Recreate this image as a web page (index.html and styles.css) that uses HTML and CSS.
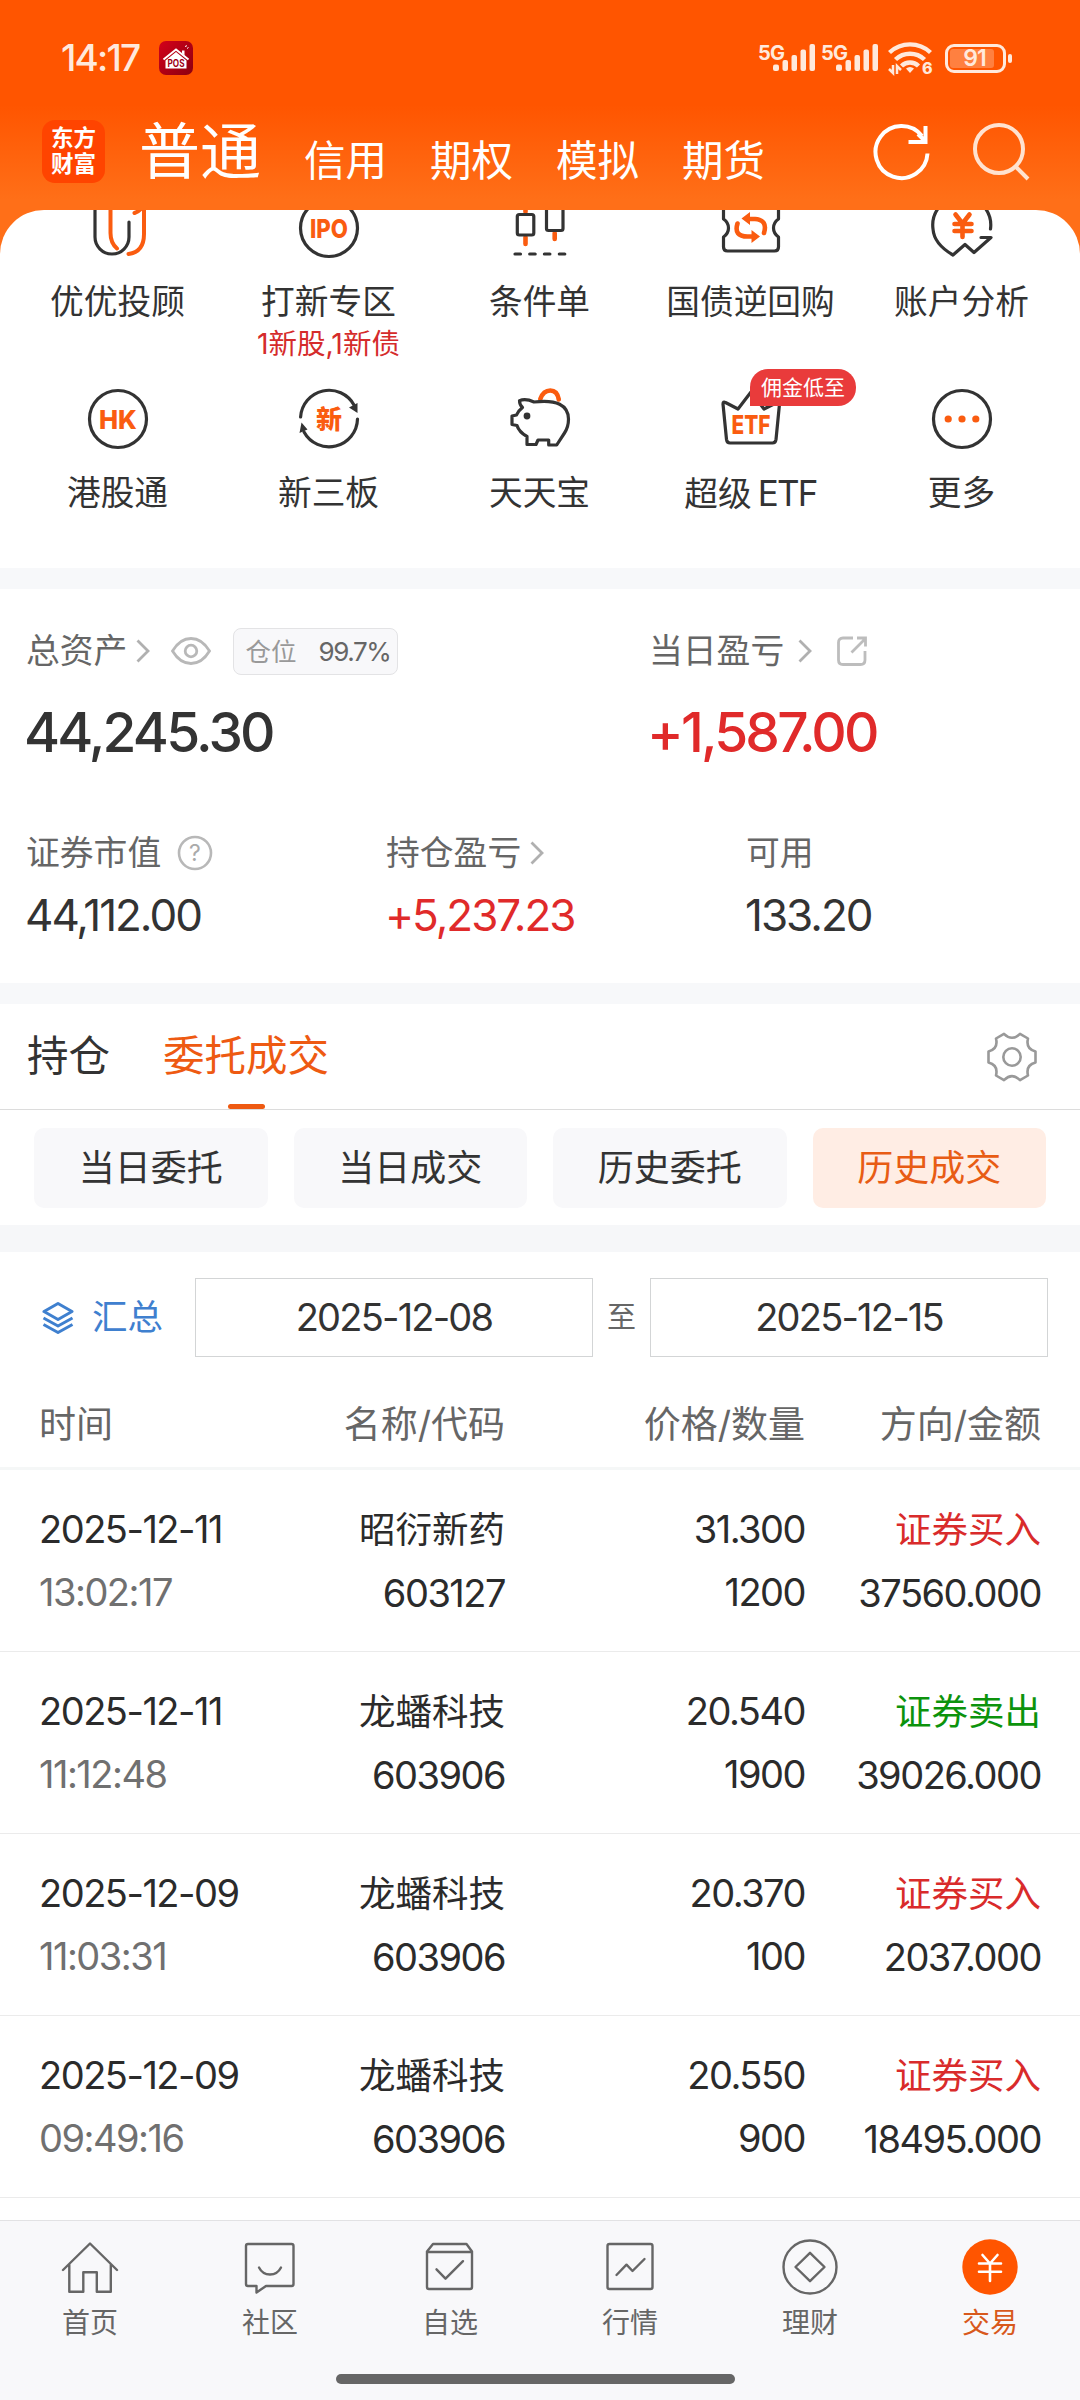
FILE: index.html
```html
<!DOCTYPE html>
<html lang="zh-CN">
<head>
    <meta charset="UTF-8">
    <meta name="viewport" content="width=device-width, initial-scale=1.0">
    <title>交易</title>
    <link rel="stylesheet" href="styles.css">
</head>
<body>
    <header class="header">
        <div class="status-bar">
            <span class="clock">14:17</span>
            <svg class="pos-icon" width="34" height="34" viewBox="0 0 34 34">
                <defs>
                    <linearGradient id="posBg" x1="0" y1="0" x2="1" y2="1">
                        <stop offset="0" stop-color="#d4001a"/>
                        <stop offset="1" stop-color="#8c0010"/>
                    </linearGradient>
                </defs>
                <rect width="34" height="34" rx="7" fill="url(#posBg)"/>
                <path d="M4.5 18.5L17 8.5l12.5 10" fill="none" stroke="#fff" stroke-width="2"/>
                <path d="M6.5 19.5L17 11l10.5 8.5V27.5h-21zM23 9.5h2.5v5L23 12.5z" fill="#fff"/>
                <path d="M26 5.5l2-.8M28 7.5l1.5-1" stroke="#fff" stroke-width="1"/>
                <text class="pos-text" x="17" y="25.5" text-anchor="middle" textLength="17" lengthAdjust="spacingAndGlyphs">POS</text>
            </svg>
            <div class="status-right">
                <div class="signal">
                    <span>5G</span>
                    <svg width="43" height="27" viewBox="0 0 43 27" fill="#ffe9dc">
                        <rect x="0" y="20.5" width="6" height="6.5" rx="2"/>
                        <rect x="9.5" y="16" width="5.5" height="11" rx="2"/>
                        <rect x="18.5" y="11" width="5.5" height="16" rx="2"/>
                        <rect x="27.5" y="5.5" width="5.5" height="21.5" rx="2"/>
                        <rect x="36.5" y="0" width="5.5" height="27" rx="2"/>
                    </svg>
                </div>
                <div class="signal">
                    <span>5G</span>
                    <svg width="43" height="27" viewBox="0 0 43 27" fill="#ffe9dc">
                        <rect x="0" y="20.5" width="6" height="6.5" rx="2"/>
                        <rect x="9.5" y="16" width="5.5" height="11" rx="2"/>
                        <rect x="18.5" y="11" width="5.5" height="16" rx="2"/>
                        <rect x="27.5" y="5.5" width="5.5" height="21.5" rx="2"/>
                        <rect x="36.5" y="0" width="5.5" height="27" rx="2"/>
                    </svg>
                </div>
                <svg class="wifi" width="46" height="38" viewBox="0 0 46 38">
                    <g fill="none" stroke="#ffe9dc" stroke-width="4.4">
                        <path d="M1.5 13.5a30 30 0 0 1 41 0"/>
                        <path d="M7.5 20.500a21 21 0 0 1 29 0"/>
                        <path d="M13.500 27a12 12 0 0 1 17 0"/>
                    </g>
                    <path d="M18 29.500q4-3 8 0l-4 4.500z" fill="#ffe9dc"/>
                    <path d="M5 26v8l-4-4M9 35v-8l4 4" fill="none" stroke="#ffe9dc" stroke-width="2.500"/>
                    <text class="wifi-text" x="34" y="34.500">6</text>
                </svg>
                <div class="battery"><span>91</span></div>
            </div>
        </div>
        <nav class="account-tabs">
            <div class="logo"><span>东方</span><span>财富</span></div>
            <a class="account-tab current">普通</a>
            <a class="account-tab">信用</a>
            <a class="account-tab">期权</a>
            <a class="account-tab">模拟</a>
            <a class="account-tab">期货</a>
            <svg class="refresh" width="60" height="60" viewBox="0 0 60 60" fill="none" stroke="#fff" stroke-width="4">
                <path d="M55.5 32.5A26 26 0 1 1 50 15"/>
                <path d="M53.5 5v16h-17M53 20L46 13"/>
            </svg>
            <svg class="search" width="60" height="60" viewBox="0 0 60 60" fill="none" stroke="#ffe2d0" stroke-width="4">
                <circle cx="28" cy="28" r="24"/>
                <path d="M45 46l12 12"/>
            </svg>
        </nav>
    </header>

    <main class="content">
        <div class="menu-wrap">
            <section class="menu">
                <a class="menu-item">
                    <svg class="menu-icon" viewBox="0 0 64 64">
                        <path class="dark" d="M9 0v41a17 17 0 0 0 34 0V26"/>
                        <path class="orange" d="M24.5 0v37q0 10 6.5 15.5M48.5 17q6-2 9.5-8v29q0 18-15.5 20"/>
                    </svg>
                    <span class="menu-label">优优投顾</span>
                </a>
                <a class="menu-item">
                    <svg class="menu-icon" viewBox="0 0 64 64">
                        <circle class="dark" cx="32" cy="32" r="28.5"/>
                        <text class="icon-text" x="13" y="42" textLength="38" lengthAdjust="spacingAndGlyphs">IPO</text>
                    </svg>
                    <span class="menu-label">打新专区</span>
                    <span class="menu-sub">1新股,1新债</span>
                </a>
                <a class="menu-item">
                    <svg class="menu-icon" viewBox="0 0 64 64">
                        <path class="orange wide" d="M17.5 8v8M17.5 41v7M46.7 37v6"/>
                        <rect class="dark" x="9.3" y="18.5" width="16.5" height="20.5" rx="2"/>
                        <rect class="dark" x="38.5" y="12" width="16.5" height="22.5" rx="2"/>
                        <path class="dark" d="M7 58h5.5M21.7 58h5.5M36.4 58h5.5M51.3 58h5.5"/>
                    </svg>
                    <span class="menu-label">条件单</span>
                </a>
                <a class="menu-item">
                    <svg class="menu-icon" viewBox="0 0 64 64">
                        <path class="dark" d="M4.5 8v15q5 3.5 5 9t-5 9v10q0 4 4 4h47q4 0 4-4V41q-5-3.5-5-9t5-9V8"/>
                        <path class="orange wide" d="M18.5 27.5q-4 13 10 13h5M45 37q4-13-9-14h-5"/>
                        <path d="M31 16v13l-8.500-6.500zM32.500 34v13l8.500-6.500z" fill="#fa5c10"/>
                    </svg>
                    <span class="menu-label">国债逆回购</span>
                </a>
                <a class="menu-item">
                    <svg class="menu-icon" viewBox="0 0 64 64">
                        <path class="dark" d="M60.5 33A29 29 0 1 0 3 33q1 15 20 26l12-10.5 9 8 17-15H51"/>
                        <path class="orange wide" d="M25.5 18.5l7 9 7-9M32.5 28v13M24.5 28h17M24.5 35h17"/>
                    </svg>
                    <span class="menu-label">账户分析</span>
                </a>
                <a class="menu-item">
                    <svg class="menu-icon" viewBox="0 0 64 64">
                        <circle class="dark" cx="32" cy="32" r="28.5"/>
                        <text class="icon-text" x="13" y="41.5" textLength="38" lengthAdjust="spacingAndGlyphs">HK</text>
                    </svg>
                    <span class="menu-label">港股通</span>
                </a>
                <a class="menu-item">
                    <svg class="menu-icon" viewBox="0 0 64 64">
                        <path class="dark" d="M3.6 30A28.5 28.5 0 0 1 57 18M60.5 32A28.5 28.5 0 0 1 7 45"/>
                        <path d="M52 20.5l8.5-4.500v10zM2.500 46l2-10.500 6 7z" fill="#333"/>
                        <text class="icon-text" x="32" y="41.5" text-anchor="middle">新</text>
                    </svg>
                    <span class="menu-label">新三板</span>
                </a>
                <a class="menu-item">
                    <svg class="menu-icon" viewBox="0 0 64 64">
                        <path class="orange wide" d="M32.3 12q3-8.5 10-8.5t8.5 9"/>
                        <path class="dark" d="M11.5 13.7q6-2.5 14.5 1.3 34-4 34.5 17 0 8-4 14L48.7 58h-8v-5H30l-2 4.5h-9v-8Q11 45 9 38.5l-5-1V29l4.5-1q1.5-4 6-7.5-3-3-3-6.8z"/>
                        <circle cx="19" cy="29" r="3.4" fill="#333"/>
                    </svg>
                    <span class="menu-label">天天宝</span>
                </a>
                <a class="menu-item">
                    <svg class="menu-icon" viewBox="0 0 64 64">
                        <path class="dark" d="M4 17q0-3 2.5-1.5L19 22 32 5l13 17 13-6.5q3-1 2.5 1.5L57 52.5q-.5 3.5-3.5 3.5H11q-3 0-3.5-3.5z"/>
                        <text class="icon-text" x="12.5" y="47" textLength="39" lengthAdjust="spacingAndGlyphs">ETF</text>
                    </svg>
                    <span class="menu-badge">佣金低至</span>
                    <span class="menu-label">超级<span class="latin">ETF</span></span>
                </a>
                <a class="menu-item">
                    <svg class="menu-icon" viewBox="0 0 64 64">
                        <circle class="dark" cx="32" cy="32" r="28.5"/>
                        <g fill="#fa5c10">
                            <circle cx="18.2" cy="32" r="3.6"/>
                            <circle cx="32" cy="32" r="3.6"/>
                            <circle cx="45.8" cy="32" r="3.6"/>
                        </g>
                    </svg>
                    <span class="menu-label">更多</span>
                </a>
            </section>
        </div>

        <section class="assets">
            <div class="assets-main">
                <div>
                    <div class="asset-label">
                        总资产
                        <svg class="chevron" width="14" height="24" viewBox="0 0 14 24"><path d="M1.5 1.5L12 12 1.5 22.5"/></svg>
                        <svg class="eye" width="40" height="28" viewBox="0 0 40 28" fill="none" stroke="#b8b8b8" stroke-width="2.8">
                            <path d="M1.5 14Q9 1.5 20 1.5T38.5 14Q31 26.5 20 26.5T1.5 14z"/>
                            <circle cx="20" cy="14" r="5.8"/>
                        </svg>
                        <span class="position-tag">仓位<b>99.7%</b></span>
                    </div>
                    <div class="asset-total">44,245.30</div>
                </div>
                <div>
                    <div class="asset-label">
                        当日盈亏
                        <svg class="chevron wide-gap" width="14" height="24" viewBox="0 0 14 24"><path d="M1.5 1.5L12 12 1.5 22.5"/></svg>
                        <svg class="share" width="30" height="30" viewBox="0 0 30 30" fill="none" stroke="#bdbdbd" stroke-width="2.8">
                            <path d="M16 2H6Q1.5 2 1.5 6.5v17.5Q1.5 28.5 6 28.5h17.5q4.5 0 4.5-4.5V15"/>
                            <path d="M14.5 16.5L28 3M20 2h8.5v8.5"/>
                        </svg>
                    </div>
                    <div class="asset-total profit">+1,587.00</div>
                </div>
            </div>
            <div class="assets-sub">
                <div>
                    <div class="asset-label">
                        证券市值
                        <svg class="help" width="36" height="36" viewBox="0 0 36 36">
                            <circle cx="18" cy="18" r="16" fill="none" stroke="#b8b8b8" stroke-width="2.6"/>
                            <text class="help-text" x="18" y="26" text-anchor="middle">?</text>
                        </svg>
                    </div>
                    <div class="asset-value">44,112.00</div>
                </div>
                <div>
                    <div class="asset-label">
                        持仓盈亏
                        <svg class="chevron" width="14" height="24" viewBox="0 0 14 24"><path d="M1.5 1.5L12 12 1.5 22.5"/></svg>
                    </div>
                    <div class="asset-value profit">+5,237.23</div>
                </div>
                <div>
                    <div class="asset-label">可用</div>
                    <div class="asset-value">133.20</div>
                </div>
            </div>
        </section>

        <section class="trade-tabs">
            <a class="trade-tab">持仓</a>
            <a class="trade-tab active">委托成交</a>
            <svg class="gear" width="50" height="50" viewBox="0 0 50 50" fill="none" stroke="#999" stroke-width="2.6">
                <path d="M17 1.800q8 8 16 0l8 4.700q-2.500 10.500 7.500 13v11q-10 2.500-7.500 13l-8 4.700q-8-8-16 0l-8-4.700q2.500-10.500-7.500-13v-11q10-2.500 7.500-13z" stroke-linejoin="round"/>
                <circle cx="25" cy="25" r="8.7"/>
            </svg>
        </section>

        <section class="sub-tabs">
            <a class="sub-tab">当日委托</a>
            <a class="sub-tab">当日成交</a>
            <a class="sub-tab">历史委托</a>
            <a class="sub-tab active">历史成交</a>
        </section>

        <section class="filter">
            <svg class="layers" width="32" height="34" viewBox="0 0 32 34" fill="none" stroke="#3f80cf" stroke-width="3" stroke-linejoin="round">
                <path d="M16 2.5L30 10.5 16 18.5 2 10.5z"/>
                <path d="M1.5 17L16 25l14.5-8M1.5 23.5L16 31.5l14.5-8"/>
            </svg>
            <span class="summary">汇总</span>
            <span class="date-box">2025-12-08</span>
            <span class="date-to">至</span>
            <span class="date-box">2025-12-15</span>
        </section>

        <section class="deals">
            <div class="deal-head">
                <span>时间</span>
                <span>名称/代码</span>
                <span>价格/数量</span>
                <span>方向/金额</span>
            </div>
            <div class="deal">
                <div>2025-12-11<br><span class="time">13:02:17</span></div>
                <div><span class="cn">昭衍新药</span><br>603127</div>
                <div>31.300<br>1200</div>
                <div><span class="cn buy">证券买入</span><br>37560.000</div>
            </div>
            <div class="deal">
                <div>2025-12-11<br><span class="time">11:12:48</span></div>
                <div><span class="cn">龙蟠科技</span><br>603906</div>
                <div>20.540<br>1900</div>
                <div><span class="cn sell">证券卖出</span><br>39026.000</div>
            </div>
            <div class="deal">
                <div>2025-12-09<br><span class="time">11:03:31</span></div>
                <div><span class="cn">龙蟠科技</span><br>603906</div>
                <div>20.370<br>100</div>
                <div><span class="cn buy">证券买入</span><br>2037.000</div>
            </div>
            <div class="deal">
                <div>2025-12-09<br><span class="time">09:49:16</span></div>
                <div><span class="cn">龙蟠科技</span><br>603906</div>
                <div>20.550<br>900</div>
                <div><span class="cn buy">证券买入</span><br>18495.000</div>
            </div>
        </section>
    </main>

    <footer class="footer">
        <nav class="bottom-nav">
            <a class="nav-item">
                <svg class="nav-icon" viewBox="0 0 60 60">
                    <path d="M3 33L30 6.5 57 33M9.3 27.5v27.2h14V35.3h13.5v19.4h14V27.5"/>
                </svg>
                首页
            </a>
            <a class="nav-item">
                <svg class="nav-icon" viewBox="0 0 60 60">
                    <path d="M8 7h43.5q2 0 2 2v38q0 2-2 2H26l-9.5 6.5V49H8q-2 0-2-2V9q0-2 2-2z"/>
                    <path d="M19 30.5q3.5 7 11 7t11-7"/>
                </svg>
                社区
            </a>
            <a class="nav-item">
                <svg class="nav-icon" viewBox="0 0 60 60">
                    <path d="M7 15v35q0 2 2 2h41q2 0 2-2V15zM7 14.5L13 7h33.5l5.5 7.5"/>
                    <path d="M16.5 32.3l9 9.4 17.5-17.5"/>
                </svg>
                自选
            </a>
            <a class="nav-item">
                <svg class="nav-icon" viewBox="0 0 60 60">
                    <rect x="7.5" y="7" width="45" height="45" rx="2"/>
                    <path d="M16.5 38l10-10.3 6 6.3L44.5 22"/>
                </svg>
                行情
            </a>
            <a class="nav-item">
                <svg class="nav-icon" viewBox="0 0 60 60">
                    <circle cx="30" cy="30" r="26.5"/>
                    <path d="M30 15.8L44.5 30 30 44.2 15.5 30z"/>
                </svg>
                理财
            </a>
            <a class="nav-item active">
                <svg class="nav-icon" viewBox="0 0 60 60">
                    <circle class="coin" cx="30" cy="30" r="27.7"/>
                    <path class="yen" d="M22.5 18l7.5 8.500 7.500-8.500M30 26.500V44M19 26.500h22M19 34.800h22"/>
                </svg>
                交易
            </a>
        </nav>
        <div class="home-bar"></div>
    </footer>
</body>
</html>
```

FILE: styles.css
```css
* {
    box-sizing: border-box;
}
body {
    font-family: Inter, "Noto Sans CJK SC", sans-serif;
    margin: 0;
    height: 2400px;
    display: flex;
    flex-direction: column;
    background: #fff;
    color: #333;
    overflow: hidden;
}
svg {
    display: block;
    flex-shrink: 0;
}

/* Header */
.header {
    height: 210px;
    padding-top: 40px;
    background: linear-gradient(#ff5500 0, #ff5500 105px, #ff6f18 200px);
    color: #fff;
}
.status-bar {
    display: flex;
    align-items: center;
    height: 36px;
    padding: 0 74px 0 61px;
    color: #ffe9dc;
}
.clock {
    width: 98px;
    font-size: 37px;
    font-weight: 500;
    line-height: 36px;
    letter-spacing: -1.8px;
}
.pos-text {
    font-size: 10px;
    font-weight: 700;
    fill: #a00014;
}
.status-right {
    display: flex;
    align-items: center;
    margin-left: auto;
}
.signal {
    display: flex;
    align-items: flex-end;
    width: 63px;
    height: 26px;
}
.signal span {
    width: 15px;
    height: 28px;
    font-size: 20px;
    font-weight: 700;
    line-height: 20px;
    letter-spacing: -0.8px;
    white-space: nowrap;
}
.wifi {
    margin-left: 4px;
}
.wifi-text {
    font-size: 16px;
    font-weight: 800;
    fill: #ffe9dc;
}
.battery {
    position: relative;
    width: 61px;
    height: 29px;
    margin-left: 11px;
    padding: 2px;
    border: 3px solid #ffe9dc;
    border-radius: 9px;
}
.battery::after {
    content: "";
    position: absolute;
    right: -9px;
    top: 7px;
    width: 4px;
    height: 9px;
    border-radius: 2px;
    background: #ffe9dc;
}
.battery span {
    display: block;
    width: 44px;
    height: 19px;
    padding-left: 5px;
    border-radius: 3px;
    background: #ff8040;
    font-size: 23px;
    font-weight: 600;
    line-height: 19px;
    letter-spacing: -1px;
    text-align: center;
}
.account-tabs {
    display: flex;
    align-items: center;
    height: 134px;
    padding: 16px 49px 0 42px;
}
.logo {
    display: flex;
    flex-direction: column;
    align-items: center;
    width: 63px;
    height: 63px;
    margin-right: 34px;
    padding-top: 5px;
    border-radius: 13px;
    background: #ff4400;
}
.logo span {
    height: 26px;
    font-size: 22.5px;
    font-weight: 700;
    line-height: 26px;
}
.account-tab {
    margin-right: 43px;
    padding-top: 19px;
    font-size: 41.5px;
    line-height: 60px;
}
.account-tab.current {
    padding-top: 1px;
    font-size: 61px;
}
.refresh {
    margin-left: auto;
    margin-right: 39px;
}

/* Shortcut menu */
.menu-wrap {
    background: #ff6f18;
}
.menu {
    display: grid;
    grid-template-columns: repeat(5, 211px);
    grid-template-rows: 177px 181px;
    height: 358px;
    padding-left: 12px;
    border-radius: 44px 44px 0 0;
    background: #fff;
    overflow: hidden;
}
.menu-item {
    position: relative;
    display: flex;
    flex-direction: column;
    align-items: center;
}
.menu-item:nth-child(-n+5) {
    margin-top: -14px;
}
.menu-icon {
    width: 64px;
    height: 64px;
    margin-bottom: 21px;
}
.dark,
.orange {
    fill: none;
    stroke: #333;
    stroke-width: 3.2;
    stroke-linecap: round;
    stroke-linejoin: round;
}
.orange {
    stroke: #fa5c10;
    stroke-width: 4;
}
.orange.wide {
    stroke-width: 4.6;
}
.icon-text {
    font-size: 26px;
    font-weight: 800;
    fill: #fa5c10;
}
.menu-label {
    font-size: 33.7px;
    line-height: 42px;
    white-space: nowrap;
}
.latin {
    margin-left: 6px;
    font-size: 35px;
    letter-spacing: -1.8px;
}
.menu-sub {
    margin-top: 3px;
    color: #d52b2b;
    font-size: 28.5px;
    line-height: 36px;
}
.menu-badge {
    position: absolute;
    left: 105px;
    top: -18px;
    width: 106px;
    height: 37px;
    border-radius: 18px 18px 18px 0;
    background: #e93b3b;
    color: #fff;
    font-size: 21px;
    line-height: 37px;
    text-align: center;
}

/* Assets */
.assets {
    height: 415px;
    padding: 37px 0 0 26px;
    border-top: 21px solid #f7f8fa;
}
.assets-main {
    display: grid;
    grid-template-columns: 623px 1fr;
}
.assets-sub {
    display: grid;
    grid-template-columns: 360px 360px 1fr;
    margin-top: 61px;
}
.asset-label {
    display: flex;
    align-items: center;
    height: 50px;
    color: #666;
    font-size: 33.8px;
    line-height: 50px;
}
.chevron {
    margin-left: 9px;
    fill: none;
    stroke: #b0b0b0;
    stroke-width: 2.8;
}
.chevron.wide-gap {
    margin-left: 14px;
}
.eye {
    margin-left: 21px;
}
.share {
    margin-left: 25px;
}
.help {
    margin-left: 16px;
}
.help-text {
    font-size: 23px;
    fill: #aaa;
}
.position-tag {
    display: flex;
    justify-content: space-between;
    width: 165px;
    height: 47px;
    margin-left: 22px;
    padding: 0 7px 0 11px;
    border: 1px solid #e3e3e5;
    border-radius: 8px;
    background: #f8f8fa;
    color: #999;
    font-size: 25.5px;
    line-height: 45px;
}
.position-tag b {
    color: #666;
    font-size: 26px;
    font-weight: 400;
    letter-spacing: -1.4px;
}
.asset-total {
    margin: 21px 0 0 -2px;
    font-size: 55px;
    font-weight: 500;
    line-height: 70px;
    letter-spacing: -2.8px;
}
.asset-value {
    margin: 7px 0 0 -1px;
    font-size: 44px;
    line-height: 60px;
    letter-spacing: -2px;
}
.profit {
    color: #e02a2a;
}

/* Tabs */
.trade-tabs {
    display: flex;
    align-items: center;
    height: 127px;
    padding: 0 43px 0 27px;
    border-top: 21px solid #f7f8fa;
    border-bottom: 1px solid #dcdcdc;
}
.trade-tab {
    position: relative;
    margin-right: 53px;
    font-size: 41.5px;
    line-height: 105px;
}
.trade-tab.active {
    color: #ee5a12;
}
.trade-tab.active::after {
    content: "";
    position: absolute;
    left: 65px;
    bottom: 0;
    width: 37px;
    height: 5px;
    border-radius: 3px;
    background: #ee5a12;
}
.gear {
    margin-left: auto;
}
.sub-tabs {
    display: grid;
    grid-template-columns: repeat(4, 1fr);
    gap: 26px;
    height: 115px;
    padding: 18px 34px;
}
.sub-tab {
    border-radius: 10px;
    background: #f8f8fa;
    font-size: 36px;
    line-height: 80px;
    text-align: center;
}
.sub-tab.active {
    background: #ffede4;
    color: #e85c14;
}

/* Date filter */
.filter {
    display: flex;
    align-items: center;
    height: 132px;
    padding: 26px 32px 0 42px;
    border-top: 27px solid #f6f7f9;
}
.summary {
    width: 103px;
    margin-left: 18px;
    color: #3f80cf;
    font-size: 35.5px;
    line-height: 79px;
}
.date-box {
    flex: 1;
    height: 79px;
    border: 1px solid #d3d5d6;
    font-size: 38px;
    line-height: 77px;
    letter-spacing: -1.8px;
    text-align: center;
}
.date-to {
    width: 57px;
    color: #666;
    font-size: 29px;
    line-height: 77px;
    text-align: center;
}

/* Deals */
.deal-head,
.deal {
    display: grid;
    grid-template-columns: 230px 236px 300px 236px;
    padding: 0 39px;
    text-align: right;
}
.deal-head {
    height: 113px;
    padding-top: 23px;
    border-bottom: 3px solid #f5f7f7;
    color: #666;
    font-size: 37px;
    line-height: 90px;
}
.deal {
    height: 182px;
    padding-top: 28px;
    border-bottom: 1px solid #ebebeb;
    color: #2b2b2b;
    font-size: 38px;
    line-height: 63px;
    letter-spacing: -1.5px;
}
.deal-head > :first-child,
.deal > :first-child {
    text-align: left;
}
.cn {
    font-size: 36.5px;
    letter-spacing: 0;
}
.time {
    color: #707070;
}
.buy {
    color: #d92b2b;
}
.sell {
    color: #0c930c;
}

/* Bottom navigation */
.footer {
    height: 180px;
    margin-top: auto;
    border-top: 1px solid #e2e2e4;
    background: #f8f8fa;
}
.bottom-nav {
    display: grid;
    grid-template-columns: repeat(6, 1fr);
    padding-top: 16px;
}
.nav-item {
    display: flex;
    flex-direction: column;
    align-items: center;
    color: #666;
    font-size: 28px;
    line-height: 36px;
}
.nav-icon {
    width: 60px;
    height: 60px;
    margin-bottom: 8px;
    fill: none;
    stroke: #666;
    stroke-width: 2.4;
    stroke-linejoin: round;
    stroke-linecap: round;
}
.nav-item.active {
    color: #d8591c;
}
.coin {
    fill: #ff5500;
    stroke: none;
}
.yen {
    stroke: #fff;
    stroke-width: 2.6;
}
.home-bar {
    width: 399px;
    height: 10px;
    margin: 33px 0 0 336px;
    border-radius: 5px;
    background: #666;
}
```
